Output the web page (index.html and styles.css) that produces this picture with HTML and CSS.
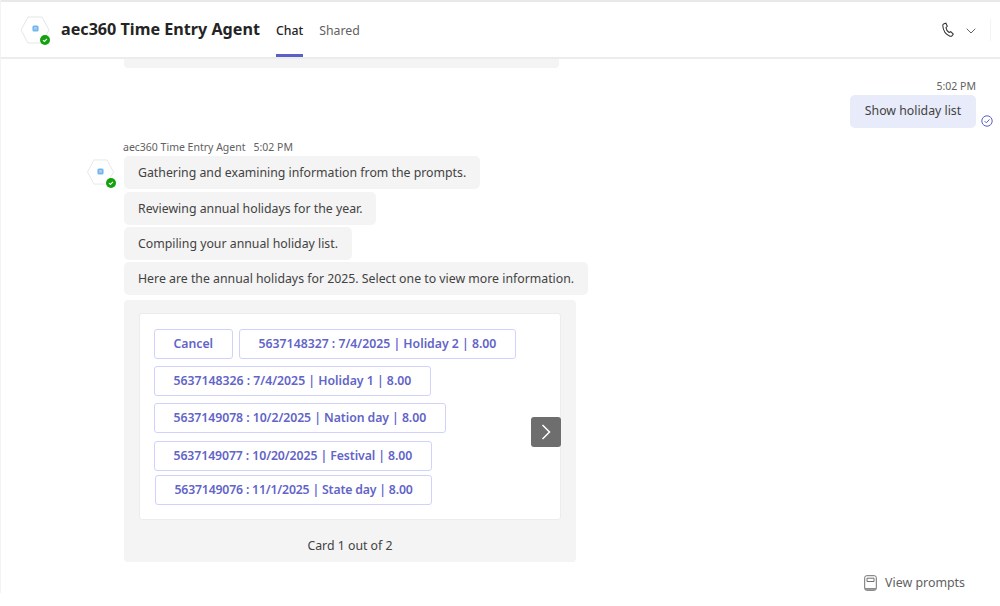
FILE: index.html
```html
<!DOCTYPE html>
<html lang="en">
<head>
<meta charset="utf-8">
<title>aec360 Time Entry Agent</title>
<link rel="stylesheet" href="styles.css">
</head>
<body>
<div class="app">
  <header class="header">
    <div class="avatar avatar-lg">
      <svg class="hex" viewBox="0 0 30 28"><path d="M8 1h14l7 13-7 13H8L1 14z"/></svg>
      <svg class="bot" viewBox="0 0 8 8"><rect x=".5" y=".5" width="7" height="7" rx="1.800" fill="#6cb8f6"/><rect x="2.300" y="2.300" width="3.400" height="3" fill="#b9c6dc"/></svg>
      <svg class="status" viewBox="0 0 10 10"><circle cx="5" cy="5" r="5" fill="#13a10e"/><path d="M3 5.200l1.400 1.300L7 3.800" fill="none" stroke="#fff" stroke-width="1.100"/></svg>
    </div>
    <h1 class="title">aec360 Time Entry Agent</h1>
    <nav class="tabs">
      <span class="tab tab-active">Chat</span>
      <span class="tab">Shared</span>
    </nav>
    <div class="call">
      <svg class="phone" viewBox="0 0 16 16"><path d="M3.200 1.300l2-.6 1.500 3.300-1.400 1.400c.3 2 1.700 4.300 3.400 5.300l1.700-.9 2.700 2.500-1.200 1.700c-.6.700-1.500.9-2.300.6C5.500 13 2.300 8.700 1.900 3.500c-.1-1 .4-1.900 1.300-2.200z"/></svg>
      <svg class="chev" viewBox="0 0 10 6"><path d="M.7.700L5 5l4.300-4.300"/></svg>
    </div>
  </header>

  <main class="chat">
    <div class="prev-card"></div>

    <section class="mine">
      <div class="mine-time">5:02 PM</div>
      <div class="mine-row">
        <div class="mine-bubble">Show holiday list</div>
        <svg class="seen" viewBox="0 0 12 12"><circle cx="6" cy="6" r="5.200"/><path d="M3.600 6.100l1.700 1.700 3.200-3.400"/></svg>
      </div>
    </section>

    <section class="agent">
      <div class="avatar avatar-sm">
        <svg class="hex" viewBox="0 0 30 28"><path d="M8 1h14l7 13-7 13H8L1 14z"/></svg>
        <svg class="bot" viewBox="0 0 8 8"><rect x=".5" y=".5" width="7" height="7" rx="1.800" fill="#6cb8f6"/><rect x="2.300" y="2.300" width="3.400" height="3" fill="#b9c6dc"/></svg>
        <svg class="status" viewBox="0 0 10 10"><circle cx="5" cy="5" r="5" fill="#13a10e"/><path d="M3 5.200l1.400 1.300L7 3.800" fill="none" stroke="#fff" stroke-width="1.100"/></svg>
      </div>
      <div class="agent-body">
        <div class="meta"><span>aec360 Time Entry Agent</span><span>5:02 PM</span></div>
        <div class="bubble">Gathering and examining information from the prompts.</div>
        <div class="bubble">Reviewing annual holidays for the year.</div>
        <div class="bubble">Compiling your annual holiday list.</div>
        <div class="bubble">Here are the annual holidays for 2025. Select one to view more information.</div>

        <div class="carousel">
          <div class="card">
            <div class="btn-row">
              <button class="btn">Cancel</button>
              <button class="btn">5637148327 : 7/4/2025 | Holiday 2 | 8.00</button>
            </div>
            <div class="btn-row"><button class="btn">5637148326 : 7/4/2025 | Holiday 1 | 8.00</button></div>
            <div class="btn-row"><button class="btn">5637149078 : 10/2/2025 | Nation day | 8.00</button></div>
            <div class="btn-row"><button class="btn">5637149077 : 10/20/2025 | Festival | 8.00</button></div>
            <div class="btn-row btn-row-last"><button class="btn">5637149076 : 11/1/2025 | State day | 8.00</button></div>
            <div class="next"><svg viewBox="0 0 10 16"><path d="M1.500 1l7 7-7 7"/></svg></div>
          </div>
          <div class="counter">Card 1 out of 2</div>
        </div>
      </div>
    </section>

    <div class="prompts">
      <svg class="book" viewBox="0 0 13 16"><rect x=".7" y=".7" width="11.600" height="14.600" rx="2"/><path d="M3 3.200h7v3.300H3z"/><path d="M1 13h11v1.800H1z" fill="#8a8a8a" stroke="none"/></svg>
      <span>View prompts</span>
    </div>
  </main>
</div>
</body>
</html>
```
FILE: styles.css
```css
* { box-sizing: border-box; }
html, body { margin: 0; padding: 0; background: #fff; }
body {
  font-family: "Noto Sans", "Open Sans", "Liberation Sans", sans-serif;
  font-size: 12.300px;
  color: #424242;
}
.app {
  width: 1000px;
  height: 593px;
  border-left: 1px solid #f3f3f3;
}
.header {
  height: 59px;
  border-top: 2px solid #e8e8e8;
  border-bottom: 2px solid #ececec;
  display: flex;
  align-items: center;
  padding-left: 19px;
}
.avatar { position: relative; flex: none; }
.avatar-lg { width: 30px; height: 28px; }
.avatar-sm { width: 29px; height: 26px; }
.hex { display: block; width: 100%; height: 100%; }
.hex path { fill: #fff; stroke: #e6e6e6; stroke-width: 1; }
.bot { position: absolute; left: 12px; top: 9px; width: 7px; height: 7px; }
.avatar-sm .bot { left: 11px; }
.status { position: absolute; right: 0; bottom: -1px; width: 10px; height: 10px; }
.avatar-sm .status { right: -1px; bottom: -3px; }
.title {
  margin: 0 0 2px 11px;
  font-size: 16.150px;
  line-height: 24px;
  font-weight: 700;
  color: #242424;
}
.tabs { display: flex; align-self: stretch; gap: 16px; margin-left: 16px; }
.tab {
  display: flex;
  align-items: center;
  height: 55px;
  font-size: 12.300px;
  color: #616161;
  border-bottom: 3px solid transparent;
  padding-top: 5px;
}
.tab-active { color: #242424; font-weight: 500; border-bottom-color: #5b5fc7; }
.call { margin-left: auto; display: flex; align-items: center; gap: 10px; padding-right: 9px; }
.call::after { content: ""; width: 1px; height: 22px; margin-left: 4px; background: #f4f4f4; }
.phone { width: 15px; height: 16px; }
.phone path { fill: none; stroke: #303030; stroke-width: 1.100; }
.chev { width: 10px; height: 6px; margin-top: 2px; }
.chev path { fill: none; stroke: #616161; stroke-width: 1; }

.chat { display: flex; flex-direction: column; }
.prev-card {
  width: 435px;
  height: 9px;
  margin-left: 123px;
  background: #f4f4f4;
  border-radius: 0 0 4px 4px;
}
.mine {
  display: flex;
  flex-direction: column;
  align-items: flex-end;
  padding-right: 24px;
  margin-top: 11px;
}
.mine-time { font-size: 10.500px; line-height: 15px; color: #616161; margin-bottom: 1px; }
.mine-row { position: relative; }
.mine-bubble {
  height: 33px;
  width: 126px;
  padding-bottom: 2px;
  border-radius: 5px;
  background: #e8ebfa;
  display: flex;
  align-items: center;
  justify-content: center;
  color: #424242;
}
.seen {
  position: absolute;
  left: 131px;
  top: 20px;
  width: 12px;
  height: 12px;
  fill: none;
  stroke: #5b5fc7;
  stroke-width: 1;
}
.agent { display: flex; margin-top: 12px; padding-left: 85px; }
.avatar-sm { margin-top: 19px; }
.agent-body { margin-left: 9px; display: flex; flex-direction: column; align-items: flex-start; gap: 2px; }
.meta { display: flex; gap: 8px; margin: 0 0 -1px -1px; font-size: 10.500px; line-height: 15px; color: #616161; }
.bubble {
  height: 33px;
  padding: 0 14px 1px;
  display: flex;
  align-items: center;
  background: #f4f4f4;
  border-radius: 5px;
  color: #424242;
}
.bubble:nth-child(3) { margin-top: 1px; }
.carousel {
  width: 452px;
  height: 262px;
  margin-top: 3px;
  padding: 13px 15px 0;
  background: #f4f4f4;
  border-radius: 4px;
}
.card {
  position: relative;
  width: 422px;
  height: 207px;
  padding: 15px 14px 0;
  background: #fff;
  border: 1px solid #ececec;
  border-radius: 3px;
}
.btn-row { display: flex; gap: 6.500px; margin-bottom: 7px; }
.btn-row:nth-child(3) { margin-bottom: 8px; letter-spacing: -.05px; }
.btn-row:nth-child(4) { margin-bottom: 4px; letter-spacing: -.08px; }
.btn-row-last { padding-left: 1px; letter-spacing: -.17px; }
.btn {
  height: 30px;
  padding: 0 18.500px 1px;
  background: #fff;
  border: 1px solid #cfd3fb;
  border-radius: 3px;
  font-family: inherit;
  font-size: 12.260px;
  font-weight: 600;
  letter-spacing: inherit;
  color: #6264c8;
}
.next {
  position: absolute;
  right: -1px;
  top: 103px;
  width: 30px;
  height: 30px;
  background: #6e6e6e;
  border-radius: 3px;
  display: flex;
  align-items: center;
  justify-content: center;
}
.next svg { width: 10px; height: 16px; fill: none; stroke: #fff; stroke-width: 1.500; }
.counter { text-align: center; margin-top: 17px; line-height: 18px; color: #424242; }
.prompts {
  display: flex;
  align-items: center;
  justify-content: flex-end;
  gap: 8px;
  margin-top: 12px;
  padding-right: 35px;
  font-size: 12.400px;
  line-height: 18px;
  color: #616161;
}
.book { width: 13px; height: 16px; fill: none; stroke: #707070; stroke-width: 1; }
```
